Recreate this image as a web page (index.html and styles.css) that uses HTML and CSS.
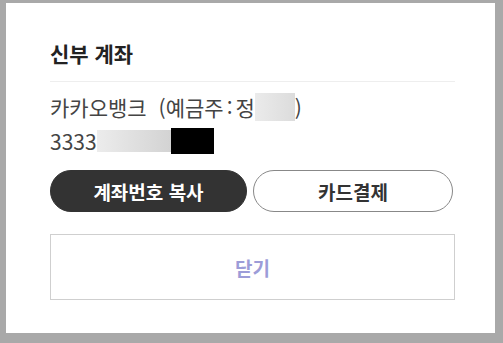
FILE: index.html
```html
<!DOCTYPE html>
<html lang="ko">
<head>
<meta charset="utf-8">
<link rel="stylesheet" href="styles.css">
</head>
<body>
<div class="card">
  <div class="title">신부 계좌</div>
  <div class="account">
    <div class="line">카카오뱅크<span class="gap"></span>(예금주<span class="colon">:</span>정<span class="mask mask-name"></span>)</div>
    <div class="line">3333<span class="mask mask-num"></span><span class="mask mask-black"></span></div>
  </div>
  <div class="actions">
    <button class="btn btn-dark">계좌번호 복사</button>
    <button class="btn btn-outline">카드결제</button>
  </div>
  <button class="close">닫기</button>
</div>
</body>
</html>
```
FILE: styles.css
```css
html, body {
  margin: 0;
  padding: 0;
}
body {
  background: #a9a9a9;
  width: 503px;
  height: 343px;
  overflow: hidden;
  font-family: "Noto Sans CJK KR", "Noto Sans", sans-serif;
}
.card {
  box-sizing: border-box;
  margin: 3px 0 0 6px;
  width: 489px;
  height: 330px;
  background: #fff;
  padding: 36px 40px 0 44px;
  display: flex;
  flex-direction: column;
}
.title {
  font-size: 21px;
  font-weight: 700;
  line-height: 28px;
  color: #222;
  padding-bottom: 14px;
  border-bottom: 1px solid #eeeeee;
}
.account {
  margin-top: 8px;
  color: #444;
  font-size: 21px;
}
.line {
  display: flex;
  align-items: center;
  height: 34px;
  line-height: 34px;
  white-space: nowrap;
}
.gap {
  display: inline-block;
  width: 12px;
}
.colon {
  padding: 0 3px;
}
.mask {
  display: inline-block;
}
.mask-name {
  width: 40px;
  height: 28px;
  background: linear-gradient(90deg, #ebebeb, #dcdcdc);
}
.mask-num {
  width: 74px;
  height: 22px;
  background: linear-gradient(90deg, #ececec, #d3d3d3);
}
.mask-black {
  width: 43px;
  height: 26px;
  background: #000;
}
.actions {
  margin-top: 12px;
  display: flex;
  gap: 6px;
}
.btn {
  height: 42px;
  border-radius: 21px;
  font-family: inherit;
  font-size: 19px;
  font-weight: 700;
  padding: 0;
  cursor: pointer;
}
.btn-dark {
  width: 197px;
  background: #333;
  color: #fff;
  border: 1px solid #333;
}
.btn-outline {
  width: 200px;
  background: #fff;
  color: #333;
  border: 1px solid #888;
}
.close {
  margin-top: 22px;
  width: 405px;
  height: 66px;
  background: #fff;
  border: 1px solid #cfcfcf;
  font-family: inherit;
  font-size: 19px;
  font-weight: 700;
  color: #9c9cd8;
  padding: 0;
}
```
